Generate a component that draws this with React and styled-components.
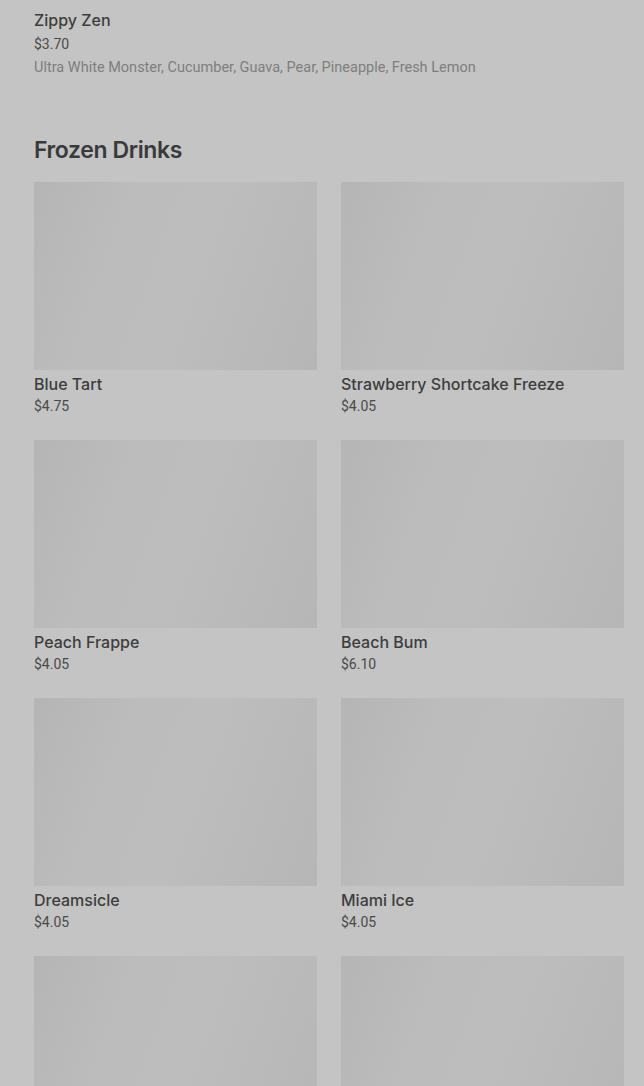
import React from "react";
import styled, { createGlobalStyle } from "styled-components";

const GlobalStyle = createGlobalStyle`
  html, body {
    margin: 0;
    padding: 0;
    background: #c4c4c4;
    font-family: Roboto, "Liberation Sans", sans-serif;
  }
`;

const Page = styled.div`
  padding: 8px 20px 0 34px;
  background: #c4c4c4;
`;

const Item = styled.div`
  display: flex;
  flex-direction: column;
`;

const ItemName = styled.div`
  font-family: Inter, "Noto Sans", sans-serif;
  font-size: 16px;
  font-weight: 500;
  line-height: 24px;
  color: #3d3d3d;
`;

const Price = styled.div`
  font-size: 14px;
  line-height: 24px;
  color: #4a4a4a;
`;

const Desc = styled.div`
  font-size: 14.5px;
  line-height: 24px;
  color: #7e7e7e;
`;

const SectionTitle = styled.h2`
  margin: 54px 0 16px;
  font-family: Inter, "Noto Sans", sans-serif;
  font-size: 23px;
  font-weight: 600;
  line-height: 32px;
  letter-spacing: -0.4px;
  color: #3a3a3a;
`;

const Grid = styled.div`
  display: grid;
  grid-template-columns: repeat(2, 283px);
  column-gap: 24px;
  row-gap: 24px;
`;

const Card = styled.div`
  display: flex;
  flex-direction: column;
`;

const Thumb = styled.div`
  height: 188px;
  background: linear-gradient(
    110deg,
    #b5b5b5 0%,
    #bcbcbc 30%,
    #bdbdbd 55%,
    #b6b6b6 100%
  );
`;

const CardName = styled(ItemName)`
  margin-top: 2px;
`;

const CardPrice = styled(Price)`
  line-height: 20px;
`;

const drinks = [
  { name: "Blue Tart", price: "$4.75" },
  { name: "Strawberry Shortcake Freeze", price: "$4.05" },
  { name: "Peach Frappe", price: "$4.05" },
  { name: "Beach Bum", price: "$6.10" },
  { name: "Dreamsicle", price: "$4.05" },
  { name: "Miami Ice", price: "$4.05" },
];

const App = () => (
  <>
    <GlobalStyle />
    <Page>
      <Item>
        <ItemName>Zippy Zen</ItemName>
        <Price>$3.70</Price>
        <Desc>Ultra White Monster, Cucumber, Guava, Pear, Pineapple, Fresh Lemon</Desc>
      </Item>
      <SectionTitle>Frozen Drinks</SectionTitle>
      <Grid>
        {drinks.map((d) => (
          <Card key={d.name}>
            <Thumb />
            <CardName>{d.name}</CardName>
            <CardPrice>{d.price}</CardPrice>
          </Card>
        ))}
        <Thumb />
        <Thumb />
      </Grid>
    </Page>
  </>
);

export default App;
